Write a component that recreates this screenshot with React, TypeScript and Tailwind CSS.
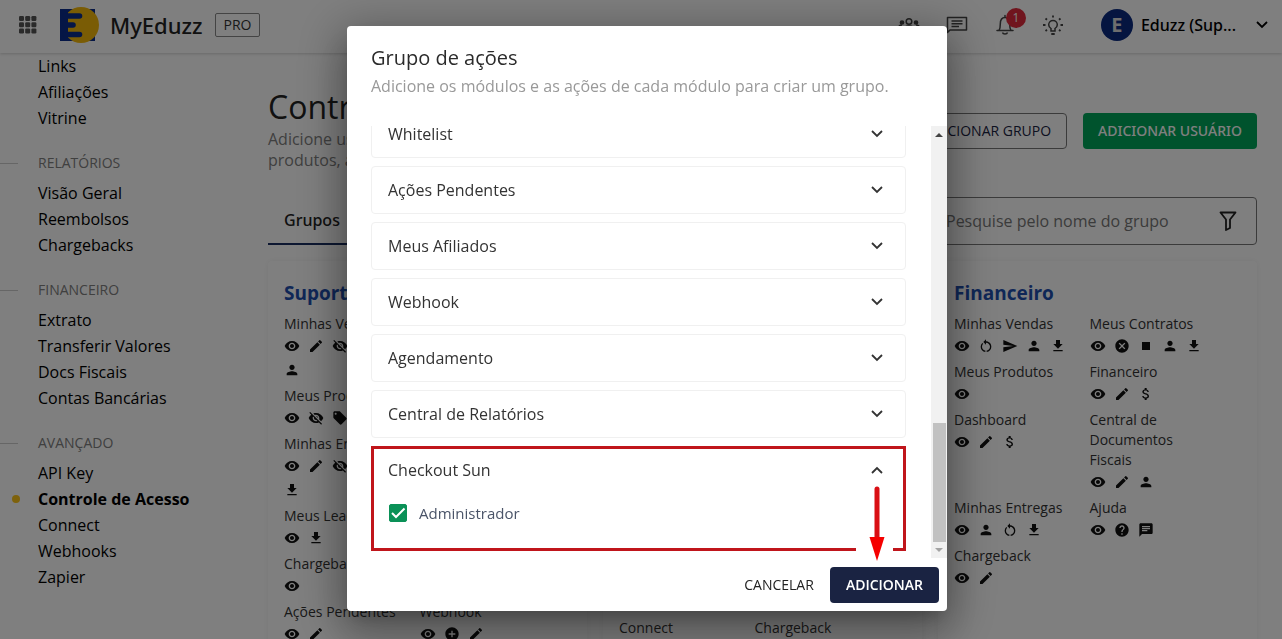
import React, { useState } from "react";
import type { IconType } from "react-icons";
import {
    MdAddCircle,
    MdAttachMoney,
    MdCancel,
    MdChat,
    MdEdit,
    MdFileDownload,
    MdHelp,
    MdLocalOffer,
    MdPerson,
    MdRestartAlt,
    MdSend,
    MdStop,
    MdVisibility,
    MdVisibilityOff,
} from "react-icons/md";

type Permission = { label: string; icons: IconType[] };
type Group = { name: string; permissions: Permission[] };

const menu = [
    { title: "", items: ["Links", "Afiliações", "Vitrine"] },
    { title: "Relatórios", items: ["Visão Geral", "Reembolsos", "Chargebacks"] },
    { title: "Financeiro", items: ["Extrato", "Transferir Valores", "Docs Fiscais", "Contas Bancárias"] },
    { title: "Avançado", items: ["API Key", "Controle de Acesso", "Connect", "Webhooks", "Zapier"] },
];

const activeItem = "Controle de Acesso";

const groups: Group[] = [
    {
        name: "Suporte",
        permissions: [
            { label: "Minhas Vendas", icons: [MdVisibility, MdEdit, MdVisibilityOff, MdSend, MdFileDownload, MdPerson] },
            { label: "Meus Contratos", icons: [MdVisibility, MdCancel] },
            { label: "Meus Produtos", icons: [MdVisibility, MdVisibilityOff, MdLocalOffer] },
            { label: "Financeiro", icons: [MdVisibility] },
            { label: "Minhas Entregas", icons: [MdVisibility, MdEdit, MdVisibilityOff, MdRestartAlt, MdPerson, MdFileDownload] },
            { label: "Dashboard", icons: [MdVisibility] },
            { label: "Meus Leads", icons: [MdVisibility, MdFileDownload] },
            { label: "Ajuda", icons: [MdVisibility, MdHelp] },
            { label: "Chargeback", icons: [MdVisibility] },
            { label: "Whitelist", icons: [MdVisibility] },
            { label: "Ações Pendentes", icons: [MdVisibility, MdEdit] },
            { label: "Webhook", icons: [MdVisibility, MdAddCircle, MdEdit] },
        ],
    },
    {
        name: "Gerente",
        permissions: [
            { label: "Minhas Vendas", icons: [MdVisibility, MdEdit, MdVisibilityOff, MdSend, MdFileDownload, MdPerson] },
            { label: "Meus Contratos", icons: [MdVisibility, MdCancel] },
            { label: "Meus Produtos", icons: [MdVisibility] },
            { label: "Financeiro", icons: [MdVisibility, MdAttachMoney] },
            { label: "Dashboard", icons: [MdVisibility] },
            { label: "Central de Documentos Fiscais", icons: [MdVisibility, MdEdit] },
            { label: "Minhas Entregas", icons: [MdVisibility] },
            { label: "Ajuda", icons: [MdVisibility, MdHelp] },
            { label: "Whitelist", icons: [MdVisibility] },
            { label: "Webhook", icons: [MdVisibility] },
            { label: "Connect", icons: [MdVisibility, MdEdit] },
            { label: "Chargeback", icons: [MdVisibility, MdEdit] },
        ],
    },
    {
        name: "Financeiro",
        permissions: [
            { label: "Minhas Vendas", icons: [MdVisibility, MdRestartAlt, MdSend, MdPerson, MdFileDownload] },
            { label: "Meus Contratos", icons: [MdVisibility, MdCancel, MdStop, MdPerson, MdFileDownload] },
            { label: "Meus Produtos", icons: [MdVisibility] },
            { label: "Financeiro", icons: [MdVisibility, MdEdit, MdAttachMoney] },
            { label: "Dashboard", icons: [MdVisibility, MdEdit, MdAttachMoney] },
            { label: "Central de Documentos Fiscais", icons: [MdVisibility, MdEdit, MdPerson] },
            { label: "Minhas Entregas", icons: [MdVisibility, MdPerson, MdRestartAlt, MdFileDownload] },
            { label: "Ajuda", icons: [MdVisibility, MdHelp, MdChat] },
            { label: "Chargeback", icons: [MdVisibility, MdEdit] },
        ],
    },
];

const modules = ["Whitelist", "Ações Pendentes", "Meus Afiliados", "Webhook", "Agendamento", "Central de Relatórios"];

const Chevron = ({ up = false }: { up?: boolean }) => (
    <svg viewBox="0 0 12 8" className="w-3 h-2 shrink-0" fill="none" stroke="currentColor" strokeWidth="1.800" aria-hidden="true">
        <path d={up ? "M1 7l5-5 5 5" : "M1 1l5 5 5-5"} />
    </svg>
);

const Logo = () => (
    <svg viewBox="0 0 40 36" className="w-10 h-9" aria-hidden="true">
        <path d="M0 2h35v32H0z" fill="#0b2c8c" />
        <circle cx="21" cy="18" r="18" fill="#f5b90a" />
        <path d="M0 2h8v32H0z" fill="#0b2c8c" />
        <path d="M5 9h14.500M5 18h8M5 27.500h14.500" stroke="#0b2c8c" strokeWidth="5.600" strokeLinecap="round" />
    </svg>
);

const Header = () => (
    <header className="relative z-10 flex h-[53px] items-center bg-white pb-[3px] pl-[18px] pr-3.5 shadow-[0_1px_3px_rgba(0,0,0,0.18)]">
        <button type="button" aria-label="Aplicativos" className="text-[#555]">
            <svg viewBox="0 0 20 20" className="size-5" fill="currentColor">
                {[1, 7.2, 13.4].map((y) =>
                    [1, 7.2, 13.4].map((x) => <rect key={`${x}-${y}`} x={x} y={y} width="5" height="5" rx="1.200" />)
                )}
            </svg>
        </button>
        <a href="#inicio" className="ml-[22px] flex items-center gap-2.5">
            <Logo />
            <span className="font-['Noto_Sans',sans-serif] text-[22px] font-medium leading-8 text-[#222]">MyEduzz</span>
        </a>
        <span className="ml-3 flex h-6 items-center rounded-xs border border-[#888] px-2 text-sm text-[#333]">PRO</span>

        <div className="ml-auto flex items-center gap-6 text-[#444]">
            <button type="button" aria-label="Equipe">
                <svg viewBox="0 0 24 24" className="size-6" fill="none" stroke="currentColor" strokeWidth="1.500">
                    <circle cx="5" cy="9.500" r="1.600" fill="currentColor" />
                    <circle cx="19" cy="9.500" r="1.600" fill="currentColor" />
                    <circle cx="12" cy="8.500" r="2.800" />
                    <path d="M7 18v-2c0-2 2-3 5-3s5 1 5 3v2zM2 16v-2c0-1 1-2 3-2M22 16v-2c0-1-1-2-3-2" />
                </svg>
            </button>
            <button type="button" aria-label="Mensagens">
                <svg viewBox="0 0 24 24" className="size-6" fill="none" stroke="currentColor" strokeWidth="1.500">
                    <path d="M2.500 19.500V4.500h19v12.500H5z" strokeLinejoin="round" />
                    <path d="M6.500 8h11M6.500 10.800h11M6.500 13.600h7.500" />
                </svg>
            </button>
            <button type="button" aria-label="Notificações" className="relative">
                <svg viewBox="0 0 24 24" className="size-6" fill="none" stroke="currentColor" strokeWidth="1.500">
                    <path d="M12 2.500v2M4 17.500h16M6 17.500c1-1.500 1.300-3 1.300-6.500 0-4 2-6.500 4.700-6.500s4.700 2.500 4.700 6.500c0 3.500.3 5 1.300 6.500" strokeLinecap="round" />
                    <path d="M9.500 19.500c.5 2 4.500 2 5 0" />
                </svg>
                <span className="absolute -top-[5px] left-[13px] flex size-5 items-center justify-center rounded-full bg-[#e02b3c] text-xs text-white">
                    1
                </span>
            </button>
            <button type="button" aria-label="Novidades">
                <svg viewBox="0 0 24 24" className="size-6" fill="none" stroke="currentColor" strokeWidth="1.500">
                    <path d="M10 18v-2.500c-1.500-1-2.300-2.200-2.300-3.800a4.300 4.300 0 0 1 8.600 0c0 1.600-.8 2.800-2.300 3.800V18z" />
                    <path d="M10.300 21h3.400M12 2.500v2M4.500 5.500l1.500 1.300M19.500 5.500L18 6.800M2 12h2.500M19.500 12H22M4.500 18l1.500-1.200M19.500 18l-1.500-1.200" strokeWidth="1.800" />
                </svg>
            </button>
            <button type="button" className="ml-3 flex items-center gap-2 font-['Noto_Sans',sans-serif] text-base font-medium text-black">
                <span className="flex size-8 items-center justify-center rounded-full bg-[#0a2a80] text-xl font-bold text-[#ddd]">E</span>
                <span>Eduzz (Sup...</span>
                <span className="ml-3">
                    <Chevron />
                </span>
            </button>
        </div>
    </header>
);

const Sidebar = () => (
    <nav className="w-[244px] shrink-0 text-base leading-[26px] text-black">
        {menu.map(({ title, items }) => (
            <section key={title}>
                {title && (
                    <h2 className="mb-1 mt-[19px] flex items-center gap-5 text-sm leading-[26px] uppercase text-[#808080]">
                        <span className="h-px w-[18px] bg-[#ccc]" />
                        {title}
                    </h2>
                )}
                <ul>
                    {items.map((item) => (
                        <li key={item} className="flex items-center pl-3">
                            <span className={item === activeItem ? "mr-[18px] size-2 rounded-full bg-[#fcc419]" : "mr-[18px] size-2"} />
                            <a href="#menu" className={item === activeItem ? "font-bold" : ""}>
                                {item}
                            </a>
                        </li>
                    ))}
                </ul>
            </section>
        ))}
    </nav>
);

const GroupCard = ({ name, permissions }: Group) => (
    <article className="rounded bg-white p-4 shadow-[0_0_6px_rgba(0,0,0,0.06)]">
        <h3 className="mb-[5px] text-[19px] font-bold leading-8 text-[#1f4fae]">{name}</h3>
        <div className="grid grid-cols-2 gap-y-1 pr-4">
            {permissions.map(({ label, icons }) => (
                <div key={label}>
                    <p className="pr-4 text-sm leading-5 text-[#333]">{label}</p>
                    <div className="flex max-w-[130px] flex-wrap gap-x-2 text-[#111]">
                        {icons.map((Icon, i) => (
                            <span key={i} className="flex h-6 items-center">
                                <Icon size={16} />
                            </span>
                        ))}
                    </div>
                </div>
            ))}
        </div>
    </article>
);

const AccessControl = () => (
    <main className="min-w-0 flex-1 pl-6 pr-[25px] pt-8">
        <div className="flex items-start justify-between">
            <div>
                <h1 className="text-[32px] leading-[44px] text-[#222]">Controle de Acesso</h1>
                <p className="text-base leading-[21px] text-[#808080]">
                    Adicione usuários e gerencie o acesso aos seus
                    <br />
                    produtos, ações e módulos.
                </p>
            </div>
            <div className="flex gap-4 pt-7">
                <button type="button" className="h-9 rounded border border-[#777] px-[15px] text-sm text-[#1a2342]">
                    ADICIONAR GRUPO
                </button>
                <button type="button" className="h-9 rounded bg-[#00a65a] px-[15px] font-['Noto_Sans',sans-serif] text-sm font-medium text-white">
                    ADICIONAR USUÁRIO
                </button>
            </div>
        </div>

        <div className="mt-[26px] flex items-center justify-between">
            <div role="tablist" className="flex">
                <button
                    type="button"
                    role="tab"
                    aria-selected="true"
                    className="h-12 border-b-2 border-[#1a2f63] px-4 font-['Noto_Sans',sans-serif] text-base font-medium text-[#222]"
                >
                    Grupos
                </button>
                <button type="button" role="tab" aria-selected="false" className="h-12 px-4 text-base text-[#555]">
                    Usuários
                </button>
            </div>
            <label className="flex h-12 w-[328px] items-center rounded border border-[#777] pl-4 pr-4">
                <input
                    type="search"
                    aria-label="Pesquisar grupo"
                    placeholder="Pesquise pelo nome do grupo"
                    className="min-w-0 flex-1 bg-transparent text-base outline-none placeholder:text-[#777]"
                />
                <svg viewBox="0 0 24 24" className="size-6 text-[#222]" fill="none" stroke="currentColor" strokeWidth="1.800" aria-hidden="true">
                    <path d="M4.500 3.500h15l-5.500 7v8.500l-4 2v-10.500z" strokeLinejoin="round" />
                </svg>
            </label>
        </div>

        <div className="mt-4 grid grid-cols-3 gap-4">
            {groups.map((group) => (
                <GroupCard key={group.name} {...group} />
            ))}
        </div>
    </main>
);

const Scrollbar = () => (
    <div className="flex w-4 shrink-0 flex-col items-center bg-[#f1f1f1]" aria-hidden="true">
        <span className="flex h-[17px] items-center">
            <svg viewBox="0 0 8 4" className="h-1 w-2" fill="#444">
                <path d="M0 4l4-4 4 4z" />
            </svg>
        </span>
        <span className="mt-auto h-[119px] w-[13px] bg-[#c1c1c1]" />
        <span className="flex h-4 items-center">
            <svg viewBox="0 0 8 4" className="h-1 w-2" fill="#a3a3a3">
                <path d="M0 0l4 4 4-4z" />
            </svg>
        </span>
    </div>
);

const GroupDialog = () => {
    const [admin, setAdmin] = useState(true);

    return (
        <div className="fixed inset-0 z-20 flex justify-center bg-black/50 pb-7 pl-3 pt-[26px]">
            <div
                role="dialog"
                aria-modal="true"
                aria-labelledby="dialog-title"
                className="relative flex w-[600px] flex-col rounded bg-white shadow-[0_11px_15px_-7px_rgba(0,0,0,0.2),0_24px_38px_3px_rgba(0,0,0,0.14),0_9px_46px_8px_rgba(0,0,0,0.3)]"
            >
                <div className="h-[100px] shrink-0 px-6 pt-[18px]">
                    <h2 id="dialog-title" className="text-xl leading-7 text-[#2b2b2b]">
                        Grupo de ações
                    </h2>
                    <p className="text-base leading-7 text-[#999]">
                        Adicione os módulos e as ações de cada módulo para criar um grupo.
                    </p>
                </div>

                <div className="flex min-h-0 flex-1">
                    <div className="flex flex-1 flex-col justify-end gap-2 overflow-hidden pb-[7px] pl-6 pr-[25px]">
                        {modules.map((name) => (
                            <button
                                key={name}
                                type="button"
                                aria-expanded="false"
                                className="flex h-12 shrink-0 items-center justify-between rounded border border-[#f0f0f0] pl-4 pr-[22px] text-base text-[#333]"
                            >
                                {name}
                                <Chevron />
                            </button>
                        ))}

                        <section className="relative h-[105px] shrink-0 border-3 border-[#c0151b]">
                            <button
                                type="button"
                                aria-expanded="true"
                                className="flex h-[42px] w-full items-center justify-between pl-[14px] pr-5 text-base text-[#333]"
                            >
                                Checkout Sun
                                <Chevron up />
                            </button>
                            <label className="ml-[15px] mt-3 flex w-fit items-center gap-3 text-[15px] leading-5 text-[#4a5468]">
                                <span className="relative flex size-[18px]">
                                    <input
                                        type="checkbox"
                                        checked={admin}
                                        onChange={(e) => setAdmin(e.target.checked)}
                                        className="size-[18px] appearance-none rounded-xs border border-[#0a9157] checked:bg-[#0a9157]"
                                    />
                                    <svg viewBox="0 0 18 18" className="pointer-events-none absolute inset-0" fill="none" stroke="#fff" strokeWidth="2" aria-hidden="true">
                                        <path d="M3 9l4 4 8.500-8.500" />
                                    </svg>
                                </span>
                                Administrador
                            </label>
                            {/* break in the frame where the arrow passes */}
                            <span className="absolute -bottom-[3px] right-[10px] h-[3px] w-[37px] bg-white" />
                        </section>
                    </div>
                    <Scrollbar />
                </div>

                <div className="flex shrink-0 justify-end gap-4 pb-2 pr-2 pt-[9px] text-sm">
                    <button type="button" className="h-9 text-[#222]">
                        CANCELAR
                    </button>
                    <button type="button" className="h-9 rounded bg-[#1a2342] px-4 font-semibold text-white">
                        ADICIONAR
                    </button>
                </div>

                <svg viewBox="0 0 16 76" className="pointer-events-none absolute bottom-[50px] right-[62px] h-[76px] w-4" aria-hidden="true">
                    <path d="M8 4v50" stroke="#d90f14" strokeWidth="5" strokeLinecap="round" />
                    <path d="M.5 52h15L8 76z" fill="#f50000" />
                </svg>
            </div>
        </div>
    );
};

const App = (): React.JSX.Element => {
    return (
        <div className="h-screen overflow-hidden bg-white font-['Open_Sans','Noto_Sans',sans-serif]">
            <Header />
            <div className="flex">
                <Sidebar />
                <AccessControl />
            </div>
            <GroupDialog />
        </div>
    );
};

export default App;
